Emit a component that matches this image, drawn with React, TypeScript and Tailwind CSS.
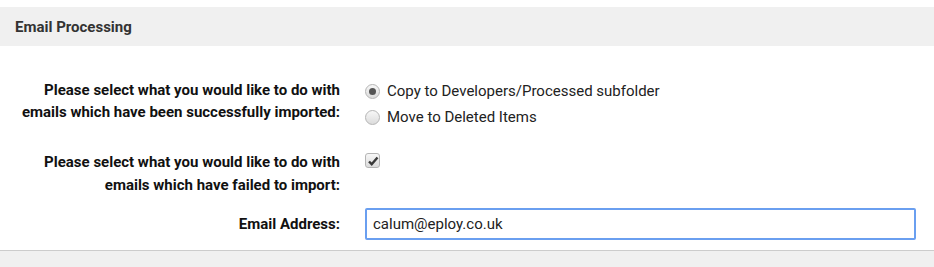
import React from 'react';

const Radio: React.FC<{ checked?: boolean; label: string }> = ({ checked, label }) => (
  <label className="flex items-center h-[26px] gap-[7px] text-[15px] text-[#222]">
    <span className="w-[15px] h-[15px] rounded-full border border-[#b5b5b5] bg-gradient-to-b from-[#f7f7f7] to-[#dcdcdc] flex items-center justify-center">
      {checked && <span className="w-[7px] h-[7px] rounded-full bg-[#555]" />}
    </span>
    {label}
  </label>
);

export default function App() {
  return (
    <div className="w-[934px] h-[267px] bg-white pt-[7px] font-['Roboto',sans-serif]">
      {/* Section header */}
      <div className="h-[39px] bg-[#f0f0f0] flex items-center px-[15px] pt-[2px]">
        <h2 className="text-[15px] font-bold text-[#333]">Email Processing</h2>
      </div>

      <div className="grid grid-cols-[340px_1fr] gap-x-[25px] pt-[33px] pr-[18px]">
        {/* Imported */}
        <div className="text-right text-[15px] font-bold leading-[22px] text-[#111]">
          Please select what you would like to do with<br />emails which have been successfully imported:
        </div>
        <div className="-mt-[1px]">
          <Radio checked label="Copy to Developers/Processed subfolder" />
          <Radio label="Move to Deleted Items" />
        </div>

        {/* Failed */}
        <div className="mt-[21px] text-right text-[15px] font-bold leading-[23px] text-[#111]">
          Please select what you would like to do with<br />emails which have failed to import:
        </div>
        <div className="mt-[23px]">
          <span className="w-[15px] h-[15px] rounded-[3px] border border-[#b5b5b5] bg-gradient-to-b from-[#f7f7f7] to-[#dcdcdc] flex items-center justify-center">
            <svg viewBox="0 0 12 12" className="w-[12px] h-[12px]">
              <path d="M2 6.5l2.7 2.7L10.5 2.5" fill="none" stroke="#3a3a3a" strokeWidth="2.4" />
            </svg>
          </span>
        </div>

        {/* Email */}
        <div className="mt-[11px] flex items-center justify-end text-[15px] font-bold text-[#111]">
          Email Address:
        </div>
        <div className="mt-[11px]">
          <input
            defaultValue="calum@eploy.co.uk"
            className="w-full h-[32px] px-[6px] text-[15px] text-[#222] border-2 border-[#6a9ff0] rounded-[2px] outline-none"
          />
        </div>
      </div>

      <div className="mt-[10px] border-t border-[#cccccc] bg-[#f0f0f0] h-[17px]" />
    </div>
  );
}
